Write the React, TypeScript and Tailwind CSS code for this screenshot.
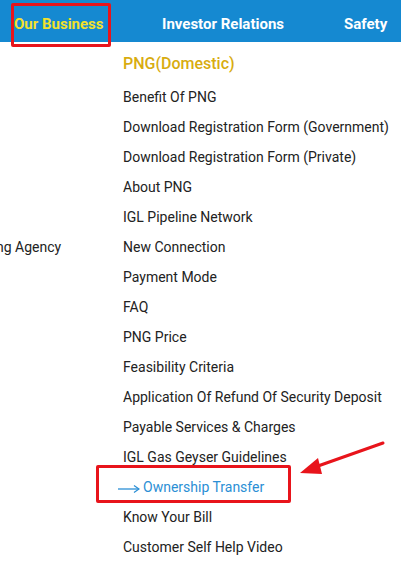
import React from "react";

const items = [
  "Benefit Of PNG",
  "Download Registration Form (Government)",
  "Download Registration Form (Private)",
  "About PNG",
  "IGL Pipeline Network",
  "New Connection",
  "Payment Mode",
  "FAQ",
  "PNG Price",
  "Feasibility Criteria",
  "Application Of Refund Of Security Deposit",
  "Payable Services & Charges",
  "IGL Gas Geyser Guidelines",
  "Ownership Transfer",
  "Know Your Bill",
  "Customer Self Help Video",
];

export default function App() {
  return (
    <div
      className="relative w-[401px] h-[566px] overflow-hidden bg-white"
      style={{ fontFamily: "Roboto, 'Liberation Sans', sans-serif" }}
    >
      {/* top navigation */}
      <nav className="h-[42px] bg-[#1589d1] flex items-start pt-[14px] text-[15px] leading-[20px] font-bold text-white">
        <span className="ml-[14px] w-[88px] whitespace-nowrap text-[#f2e12c]">Our Business</span>
        <span className="ml-[60px]">Investor Relations</span>
        <span className="ml-[60px]">Safety</span>
      </nav>

      <div className="flex">
        {/* left column, cut off */}
        <div className="w-[123px] shrink-0 relative">
          <span className="absolute left-[-4px] top-[195px] text-[14px] text-[#222] whitespace-nowrap">
            ng Agency
          </span>
        </div>

        {/* dropdown panel */}
        <div className="flex flex-col">
          <h3 className="h-[40px] pt-[10px] text-[16px] font-medium text-[#d8ac10] leading-[24px]">
            PNG(Domestic)
          </h3>
          <ul className="flex flex-col">
            {items.map((item) =>
              item === "Ownership Transfer" ? (
                <li
                  key={item}
                  className="h-[30px] flex items-center text-[14px] text-[#2b8fd5] -ml-[5px] whitespace-nowrap"
                >
                  <svg width="22" height="10" viewBox="0 0 22 10" className="mr-[3px] mt-[3px]">
                    <line x1="0" y1="5" x2="21" y2="5" stroke="#2b8fd5" strokeWidth="1.3" />
                    <path d="M16 1.5 L21 5 L16 8.5" fill="none" stroke="#2b8fd5" strokeWidth="1.3" />
                  </svg>
                  {item}
                </li>
              ) : (
                <li
                  key={item}
                  className="h-[30px] flex items-center text-[14px] text-[#222] whitespace-nowrap"
                >
                  {item}
                </li>
              )
            )}
          </ul>
        </div>
      </div>

      {/* red annotation frames */}
      <div className="absolute left-[11px] top-[3px] w-[100px] h-[44px] border-[3px] border-[#e8141b] rounded-[2px]" />
      <div className="absolute left-[96px] top-[465px] w-[195px] h-[38px] border-[3px] border-[#e8141b] rounded-[2px]" />
      <svg className="absolute left-0 top-0" width="401" height="566">
        <line x1="383" y1="443" x2="318" y2="466" stroke="#e8141b" strokeWidth="3" strokeLinecap="round" />
        <polygon points="300,473 318,458 322,474" fill="#e8141b" />
      </svg>
    </div>
  );
}
